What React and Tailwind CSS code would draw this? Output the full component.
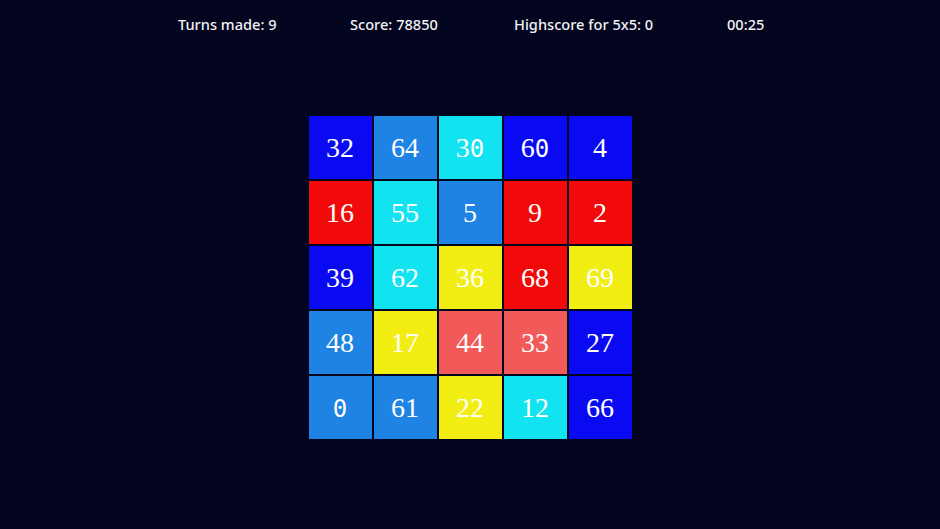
import React from "react";

const C = {
  b: "bg-[#0a0af2]",
  m: "bg-[#1e83e3]",
  c: "bg-[#12e3f0]",
  r: "bg-[#f20a0a]",
  y: "bg-[#f2ee14]",
  s: "bg-[#f25a5a]",
};

const rows = [
  [["b", "32"], ["m", "64"], ["c", "30"], ["b", "60"], ["b", "4"]],
  [["r", "16"], ["c", "55"], ["m", "5"], ["r", "9"], ["r", "2"]],
  [["b", "39"], ["c", "62"], ["y", "36"], ["r", "68"], ["y", "69"]],
  [["m", "48"], ["y", "17"], ["s", "44"], ["s", "33"], ["b", "27"]],
  [["m", "0"], ["m", "61"], ["y", "22"], ["c", "12"], ["b", "66"]],
];

function Num({ v }) {
  return (
    <span>
      {v.split("").map((ch, i) =>
        ch === "0" ? (
          <span key={i} className="font-['DejaVu_Sans_Mono',monospace] text-[24px]">0</span>
        ) : (
          <span key={i}>{ch}</span>
        )
      )}
    </span>
  );
}

export default function App() {
  return (
    <div className="w-[940px] h-[529px] bg-[#03041e] overflow-hidden">
      <div className="flex pl-[178px] pt-[13px] text-[14.6px] leading-[22px] font-medium text-[#f2f2f5] font-['Noto_Sans',sans-serif]">
        <div className="w-[172px]">Turns made: 9</div>
        <div className="w-[164px]">Score: 78850</div>
        <div className="w-[213px]">Highscore for 5x5: 0</div>
        <div>00:25</div>
      </div>
      <div className="mt-[81px] flex justify-center">
        <div className="grid grid-cols-[repeat(5,63px)] grid-rows-[repeat(5,63px)] gap-[2px] font-['Liberation_Serif',serif] text-[28px] text-white">
          {rows.flat().map(([c, v], i) => (
            <div key={i} className={`${C[c]} flex items-center justify-center leading-none`}>
              <Num v={v} />
            </div>
          ))}
        </div>
      </div>
    </div>
  );
}
